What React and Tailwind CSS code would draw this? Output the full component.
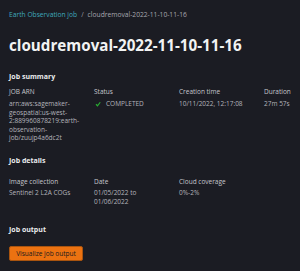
export default function App() {
  const font = { fontFamily: '"Open Sans", "Noto Sans", sans-serif' };
  return (
    <div style={font} className="w-[300px] h-[271px] overflow-hidden bg-[#1b1c23] pl-[9px] pt-[10px]">
      <div className="flex items-center text-[6.7px] leading-[10px] whitespace-nowrap">
        <span className="text-[#3fa9bd]">Earth Observation job</span>
        <span className="mx-[4px] text-[#9b9ba3]">/</span>
        <span className="text-[#a8a8b0]">cloudremoval-2022-11-10-11-16</span>
      </div>
      <h1 className="mt-[15px] text-[15.2px] leading-[20px] font-bold text-[#f2f3f3] whitespace-nowrap">
        cloudremoval-2022-11-10-11-16
      </h1>

      <div className="mt-[17px] text-[7px] leading-[10px] font-bold text-[#e9ebed]">Job summary</div>
      <div className="mt-[5px] grid grid-cols-[85px_85px_85px_85px] text-[6.5px]">
        <div>
          <div className="leading-[10px] text-[#c6c6cd]">JOB ARN</div>
          <div className="mt-[3px] leading-[8.5px] text-[#b4b4bb] w-[78px] break-all">
            arn:aws:sagemaker-<br />geospatial:us-west-<br />2:889960878219:earth-<br />observation-<br />job/zuujp4a6dc2t
          </div>
        </div>
        <div>
          <div className="leading-[10px] text-[#c6c6cd]">Status</div>
          <div className="mt-[3px] leading-[8.5px] text-[#b4b4bb] flex items-center whitespace-nowrap">
            <svg width="6" height="6" viewBox="0 0 12 12" className="ml-[1px] mr-[5px]">
              <path d="M2 6.5 L5 9.5 L10.5 2.5" stroke="#29ad32" strokeWidth="2.4" fill="none" />
            </svg>
            COMPLETED
          </div>
        </div>
        <div>
          <div className="leading-[10px] text-[#c6c6cd]">Creation time</div>
          <div className="mt-[3px] leading-[8.5px] text-[#b4b4bb] whitespace-nowrap">10/11/2022, 12:17:08</div>
        </div>
        <div>
          <div className="leading-[10px] text-[#c6c6cd]">Duration</div>
          <div className="mt-[3px] leading-[8.5px] text-[#b4b4bb] whitespace-nowrap">27m 57s</div>
        </div>
      </div>

      <div className="mt-[13px] text-[7px] leading-[10px] font-bold text-[#e9ebed]">Job details</div>
      <div className="mt-[11px] grid grid-cols-[85px_85px_85px] text-[6.5px]">
        <div>
          <div className="leading-[10px] text-[#c6c6cd]">Image collection</div>
          <div className="mt-[1px] leading-[9px] text-[#b4b4bb] whitespace-nowrap">Sentinel 2 L2A COGs</div>
        </div>
        <div>
          <div className="leading-[10px] text-[#c6c6cd]">Date</div>
          <div className="mt-[1px] leading-[9px] text-[#b4b4bb]">01/05/2022 to<br />01/06/2022</div>
        </div>
        <div>
          <div className="leading-[10px] text-[#c6c6cd]">Cloud coverage</div>
          <div className="mt-[1px] leading-[9px] text-[#b4b4bb]">0%-2%</div>
        </div>
      </div>

      <div className="mt-[19px] text-[7px] leading-[10px] font-bold text-[#e9ebed]">Job output</div>
      <button className="mt-[11px] w-[74px] h-[15px] rounded-[2px] bg-[#ec7211] border border-[#a9540f] text-[6.5px] leading-[13px] text-[#16191f] font-medium whitespace-nowrap flex items-center justify-center">
        Visualize job output
      </button>
    </div>
  );
}
